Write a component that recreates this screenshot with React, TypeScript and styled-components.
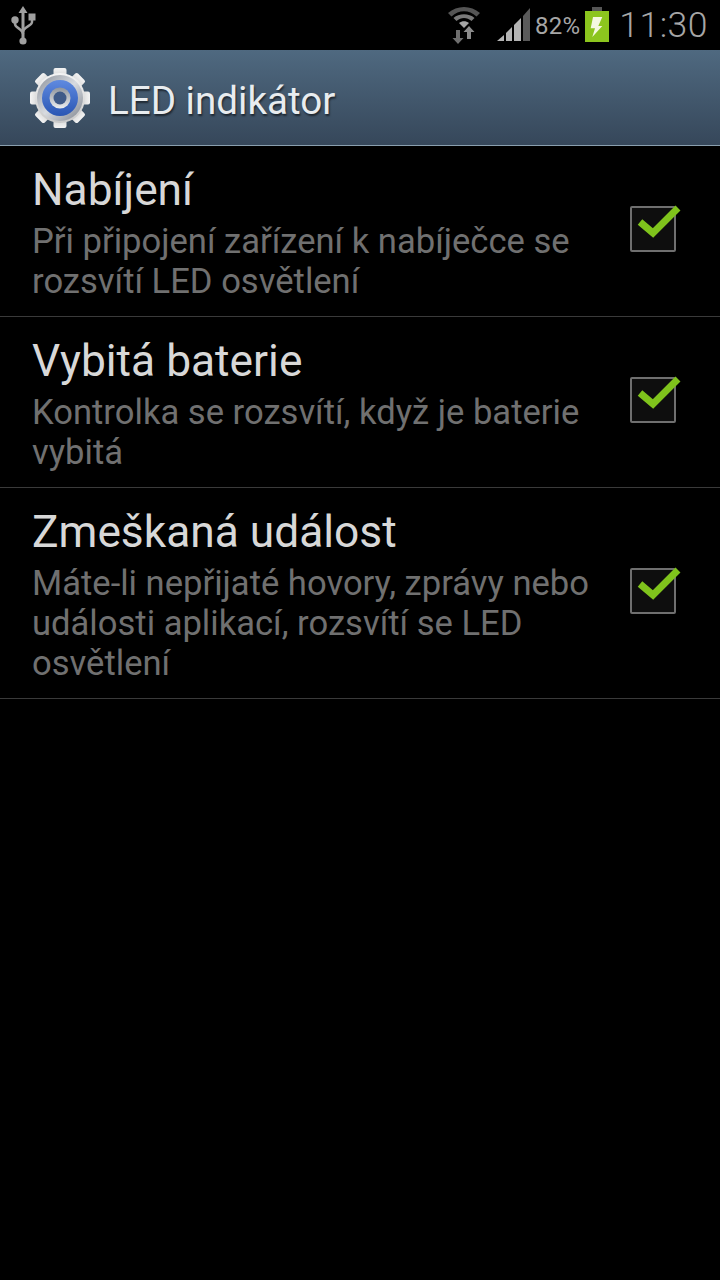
import React from 'react';
import styled, { createGlobalStyle } from 'styled-components';

const GlobalStyle = createGlobalStyle`
    html, body {
        margin: 0;
        padding: 0;
        background: #000;
    }
    * {
        box-sizing: border-box;
    }
`;

const Screen = styled.div`
    width: 720px;
    height: 1280px;
    background: #000;
    font-family: Roboto, 'Liberation Sans', sans-serif;
    overflow: hidden;
`;

const StatusBar = styled.div`
    height: 50px;
    display: flex;
    align-items: center;
    padding: 0 12px 0 9px;
    color: #a6a6a6;
`;

const StatusRight = styled.div`
    margin-left: auto;
    display: flex;
    align-items: center;
`;

const SignalSlot = styled.span`
    display: flex;
    margin-left: 15px;
`;

const Percent = styled.span`
    font-size: 24px;
    margin: 2px 5px 0 4px;
    letter-spacing: 0.2px;
`;

const Clock = styled.span`
    font-size: 35.5px;
    font-weight: 300;
    margin-left: 10px;
    letter-spacing: 0.5px;
`;

const Header = styled.div`
    height: 96px;
    display: flex;
    align-items: center;
    gap: 18px;
    padding: 0 0 0 29px;
    background: linear-gradient(#4f6980, #36475a);
    border-bottom: 1px solid #8a9fae;
`;

const HeaderTitle = styled.h1`
    margin: 5px 0 0 -1px;
    font-size: 38.6px;
    font-weight: 400;
    color: #e8ecef;
    text-shadow: 1px 2px 2px rgba(0, 0, 0, 0.55);
`;

const Row = styled.div`
    display: flex;
    align-items: center;
    justify-content: space-between;
    padding: 13px 44px 15px 32px;
    border-bottom: 1px solid #3a3a3a;
`;

const RowText = styled.div`
    width: 565px;
`;

const RowTitle = styled.div`
    font-size: 44.3px;
    line-height: 62px;
    color: #d8d8d8;
`;

const RowDescription = styled.div`
    font-size: 34.6px;
    line-height: 40px;
    color: #707070;
    white-space: nowrap;
`;

const CheckBox = styled.div`
    position: relative;
    width: 46px;
    height: 46px;
    flex: none;
    margin-bottom: 2px;
    background: #0e0e0e;
    border: 2px solid #6f6f6f;
    border-radius: 2px;
`;

const Tick = styled.svg`
    position: absolute;
    left: 4px;
    top: -9px;
`;

const UsbIcon = () => (
    <svg width="28" height="40" viewBox="0 0 28 40" fill="none">
        <path d="M14 1l4.500 7h-3v27h-3V8h-3z" fill="#a0a0a0" />
        <path d="M6 15v4c0 4 8 5 8 10M23 15v2c0 4-9 5-9 10" stroke="#a0a0a0" strokeWidth="2.500" />
        <circle cx="6" cy="15" r="3.700" fill="#a0a0a0" />
        <rect x="19.500" y="8.500" width="7" height="7" fill="#a0a0a0" />
        <circle cx="14" cy="36" r="3.600" fill="#a0a0a0" />
    </svg>
);

const WifiIcon = () => (
    <svg width="34" height="38" viewBox="0 0 34 38" fill="none">
        <path d="M0 7C9-1 23-1 32 7l-3.500 3.500C21 3.500 11 3.500 3.500 10.500z" fill="#555" />
        <path d="M5.500 12C11 7 21 7 26.500 12l-3 3C19 11 13 11 8.500 15z" fill="#7a7a7a" />
        <path d="M11 17c3-2.500 7-2.500 10 0l-5 5z" fill="#a6a6a6" />
        <path d="M8 24h4v8h3.500L10 38 4.500 32H8z" fill="#6e6e6e" />
        <path d="M19 33v-7h-3.500L21 20l5.500 6H23v7z" fill="#8a8a8a" />
    </svg>
);

const SignalIcon = () => (
    <svg width="34" height="34" viewBox="0 0 34 34">
        <path d="M0 33l7-6v6z" fill="#b4b4b4" />
        <path d="M9 25l6-6v14H9z" fill="#b4b4b4" />
        <path d="M17 17l7-7v23h-7z" fill="#b4b4b4" />
        <path d="M26 8l7-8v33h-7z" fill="#5a5a5a" />
    </svg>
);

const BatteryIcon = () => (
    <svg width="24" height="36" viewBox="0 0 24 36">
        <rect x="7" y="0" width="10" height="4" fill="#555" />
        <rect x="0" y="4" width="24" height="31" fill="#8cc51e" />
        <path d="M8 10h9.300l-4 9h4L7.300 30 10 21.300H5.700z" fill="#f4f8e0" />
    </svg>
);

const GearIcon = () => {
    const teeth = Array.from({ length: 8 }, (_, i) => i * 45);
    return (
        <svg width="62" height="62" viewBox="0 0 62 62">
            <defs>
                <linearGradient id="gear" x1="0" y1="0" x2="0" y2="1">
                    <stop offset="0" stopColor="#f4f4f4" />
                    <stop offset="1" stopColor="#c9c9c9" />
                </linearGradient>
                <linearGradient id="ring" x1="0" y1="0" x2="1" y2="1">
                    <stop offset="0" stopColor="#8b919a" />
                    <stop offset="0.5" stopColor="#d8dbe0" />
                    <stop offset="1" stopColor="#7c828c" />
                </linearGradient>
                <linearGradient id="blue" x1="0" y1="0" x2="0" y2="1">
                    <stop offset="0" stopColor="#5f8ae0" />
                    <stop offset="1" stopColor="#2a56b4" />
                </linearGradient>
                <linearGradient id="hub" x1="0" y1="0" x2="0" y2="1">
                    <stop offset="0" stopColor="#8e949c" />
                    <stop offset="1" stopColor="#eceef0" />
                </linearGradient>
            </defs>
            {teeth.map((deg) => (
                <rect key={deg} x="24.500" y="1" width="13" height="12" rx="2" fill="url(#gear)" transform={`rotate(${deg} 31 31)`} />
            ))}
            <circle cx="31" cy="31" r="25" fill="url(#gear)" />
            <circle cx="31" cy="31" r="23" fill="url(#ring)" />
            <circle cx="31" cy="31" r="18" fill="url(#blue)" />
            <circle cx="31" cy="31" r="10.500" fill="url(#hub)" />
            <circle cx="31" cy="31" r="6.500" fill="#3f5a88" />
        </svg>
    );
};

const CheckIcon = () => (
    <Tick width="46" height="40" viewBox="0 0 46 40" fill="none">
        <path d="M4 23l13 11L42 9" stroke="#7fc31c" strokeWidth="7" />
    </Tick>
);

const rows = [
    {
        title: 'Nabíjení',
        description: ['Při připojení zařízení k nabíječce se', 'rozsvítí LED osvětlení'],
    },
    {
        title: 'Vybitá baterie',
        description: ['Kontrolka se rozsvítí, když je baterie', 'vybitá'],
    },
    {
        title: 'Zmeškaná událost',
        description: ['Máte-li nepřijaté hovory, zprávy nebo', 'události aplikací, rozsvítí se LED', 'osvětlení'],
    },
];

export default function App() {
    return (
        <Screen>
            <GlobalStyle />
            <StatusBar>
                <UsbIcon />
                <StatusRight>
                    <WifiIcon />
                    <SignalSlot>
                        <SignalIcon />
                    </SignalSlot>
                    <Percent>82%</Percent>
                    <BatteryIcon />
                    <Clock>11:30</Clock>
                </StatusRight>
            </StatusBar>
            <Header>
                <GearIcon />
                <HeaderTitle>LED indikátor</HeaderTitle>
            </Header>
            {rows.map((row) => (
                <Row key={row.title}>
                    <RowText>
                        <RowTitle>{row.title}</RowTitle>
                        <RowDescription>
                            {row.description.map((line) => (
                                <div key={line}>{line}</div>
                            ))}
                        </RowDescription>
                    </RowText>
                    <CheckBox>
                        <CheckIcon />
                    </CheckBox>
                </Row>
            ))}
        </Screen>
    );
}
